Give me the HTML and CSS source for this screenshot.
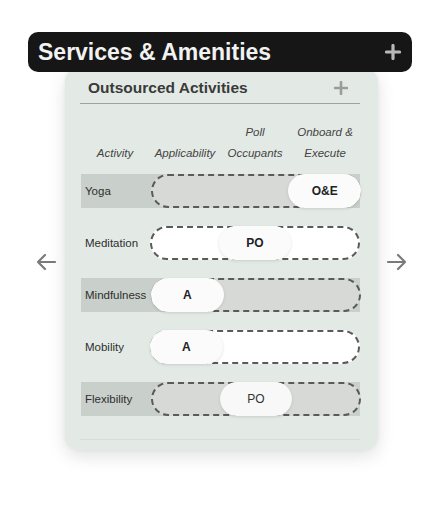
FILE: index.html
```html
<!DOCTYPE html>
<html>
<head>
<meta charset="utf-8">
<link rel="stylesheet" href="styles.css">
</head>
<body>
<div class="page">
  <div class="topbar">
    <span class="topbar-title">Services &amp; Amenities</span>
    <svg class="topbar-plus" width="16" height="16" viewBox="0 0 16 16"><path d="M8 1.5v13M1.5 8h13" stroke="#b9b9b9" stroke-width="3.2" stroke-linecap="round"/></svg>
  </div>
  <div class="stage">
    <svg class="arrow" width="22" height="20" viewBox="0 0 22 20"><path d="M20 10H3M10 3L3 10l7 7" fill="none" stroke="#7a7a7a" stroke-width="2.2" stroke-linecap="round" stroke-linejoin="round"/></svg>
    <div class="card">
      <div class="card-head">
        <span class="card-title">Outsourced Activities</span>
        <svg class="card-plus" width="14" height="14" viewBox="0 0 14 14"><path d="M7 1v12M1 7h12" stroke="#9a9d9a" stroke-width="2.6" stroke-linecap="round"/></svg>
      </div>
      <div class="cols">
        <span>Activity</span>
        <span>Applicability</span>
        <span>Poll<br>Occupants</span>
        <span>Onboard &amp;<br>Execute</span>
      </div>
      <div class="rows">
        <div class="row shaded">
          <span class="label">Yoga</span>
          <div class="track grey"><span class="thumb c3">O&amp;E</span></div>
        </div>
        <div class="row">
          <span class="label">Meditation</span>
          <div class="track white"><span class="thumb c2">PO</span></div>
        </div>
        <div class="row shaded">
          <span class="label">Mindfulness</span>
          <div class="track grey"><span class="thumb c1">A</span></div>
        </div>
        <div class="row">
          <span class="label">Mobility</span>
          <div class="track white"><span class="thumb c1">A</span></div>
        </div>
        <div class="row shaded">
          <span class="label">Flexibility</span>
          <div class="track grey"><span class="thumb c2 soft">PO</span></div>
        </div>
      </div>
      <div class="card-foot"></div>
    </div>
    <svg class="arrow" width="22" height="20" viewBox="0 0 22 20"><path d="M2 10h17M12 3l7 7-7 7" fill="none" stroke="#7a7a7a" stroke-width="2.2" stroke-linecap="round" stroke-linejoin="round"/></svg>
  </div>
</div>
</body>
</html>
```
FILE: styles.css
```css
* { box-sizing: border-box; }
html, body { margin: 0; padding: 0; background: #ffffff; }
body { font-family: "Liberation Sans", Arial, sans-serif; color: #333; }

.page { padding-top: 32px; width: 441px; height: 522px; }

.topbar {
  position: relative;
  z-index: 2;
  margin-left: 28px;
  width: 384px;
  height: 40px;
  background: #161616;
  border-radius: 10px;
  display: flex;
  align-items: center;
  justify-content: space-between;
  padding: 0 11px 0 10px;
}
.topbar-title {
  color: #f2f2f2;
  font-weight: bold;
  font-size: 23px;
}

.stage {
  display: flex;
  align-items: center;
  margin-top: -4px;
  padding-left: 35px;
}
.arrow { flex: none; margin-top: 6px; }
.stage > .arrow:first-child { margin-right: 8px; }
.stage > .arrow:last-child { margin-left: 8px; }

.card {
  width: 313px;
  background: #e3eae5;
  border-radius: 14px;
  box-shadow: 0 6px 18px rgba(0, 0, 0, 0.12), 0 0 4px rgba(0,0,0,0.05);
  padding: 7px 18px 10px 15px;
}

.card-head {
  display: flex;
  align-items: center;
  justify-content: space-between;
  padding: 4px 12px 6px 8px;
  border-bottom: 1.5px solid #9ea39f;
}
.card-title { font-weight: bold; font-size: 15.5px; color: #3a3a3a; }

.cols {
  display: grid;
  grid-template-columns: repeat(4, 70px);
  margin-top: 18px;
  font-style: italic;
  font-size: 11.5px;
  line-height: 21px;
  color: #444;
  align-items: end;
}
.cols span { text-align: center; }

.rows {
  display: flex;
  flex-direction: column;
  gap: 18px;
  margin-top: 10px;
}
.row {
  display: grid;
  grid-template-columns: 70px 210px;
  height: 34px;
  align-items: stretch;
}
.row.shaded { background: #c9cfca; margin-left: 1px; }
.row:not(.shaded) .label { padding-left: 5px; }
.label {
  font-size: 11.5px;
  color: #2e2e2e;
  display: flex;
  align-items: center;
  padding-left: 4px;
}
.track {
  display: grid;
  grid-template-columns: repeat(3, 1fr);
  border: 2px dashed #5a5a5a;
  border-radius: 17px;
}
.track.grey { background: #d6d9d6; }
.track.white { background: #ffffff; }
.thumb {
  grid-row: 1;
  margin: -2px;
  background: #fbfbfb;
  border-radius: 17px;
  display: flex;
  align-items: center;
  justify-content: center;
  font-size: 12px;
  font-weight: bold;
  color: #222;
  box-shadow: 0 1px 3px rgba(0, 0, 0, 0.12);
}
.thumb.c1 { grid-column: 1; margin-left: -2px; }
.thumb.c2 { grid-column: 2; }
.thumb.c3 { grid-column: 3; }
.thumb.soft { font-weight: normal; color: #333; background: #f7f8f7; }

.card-foot {
  height: 24px;
  border-bottom: 1px solid #d7ddd8;
}
```
